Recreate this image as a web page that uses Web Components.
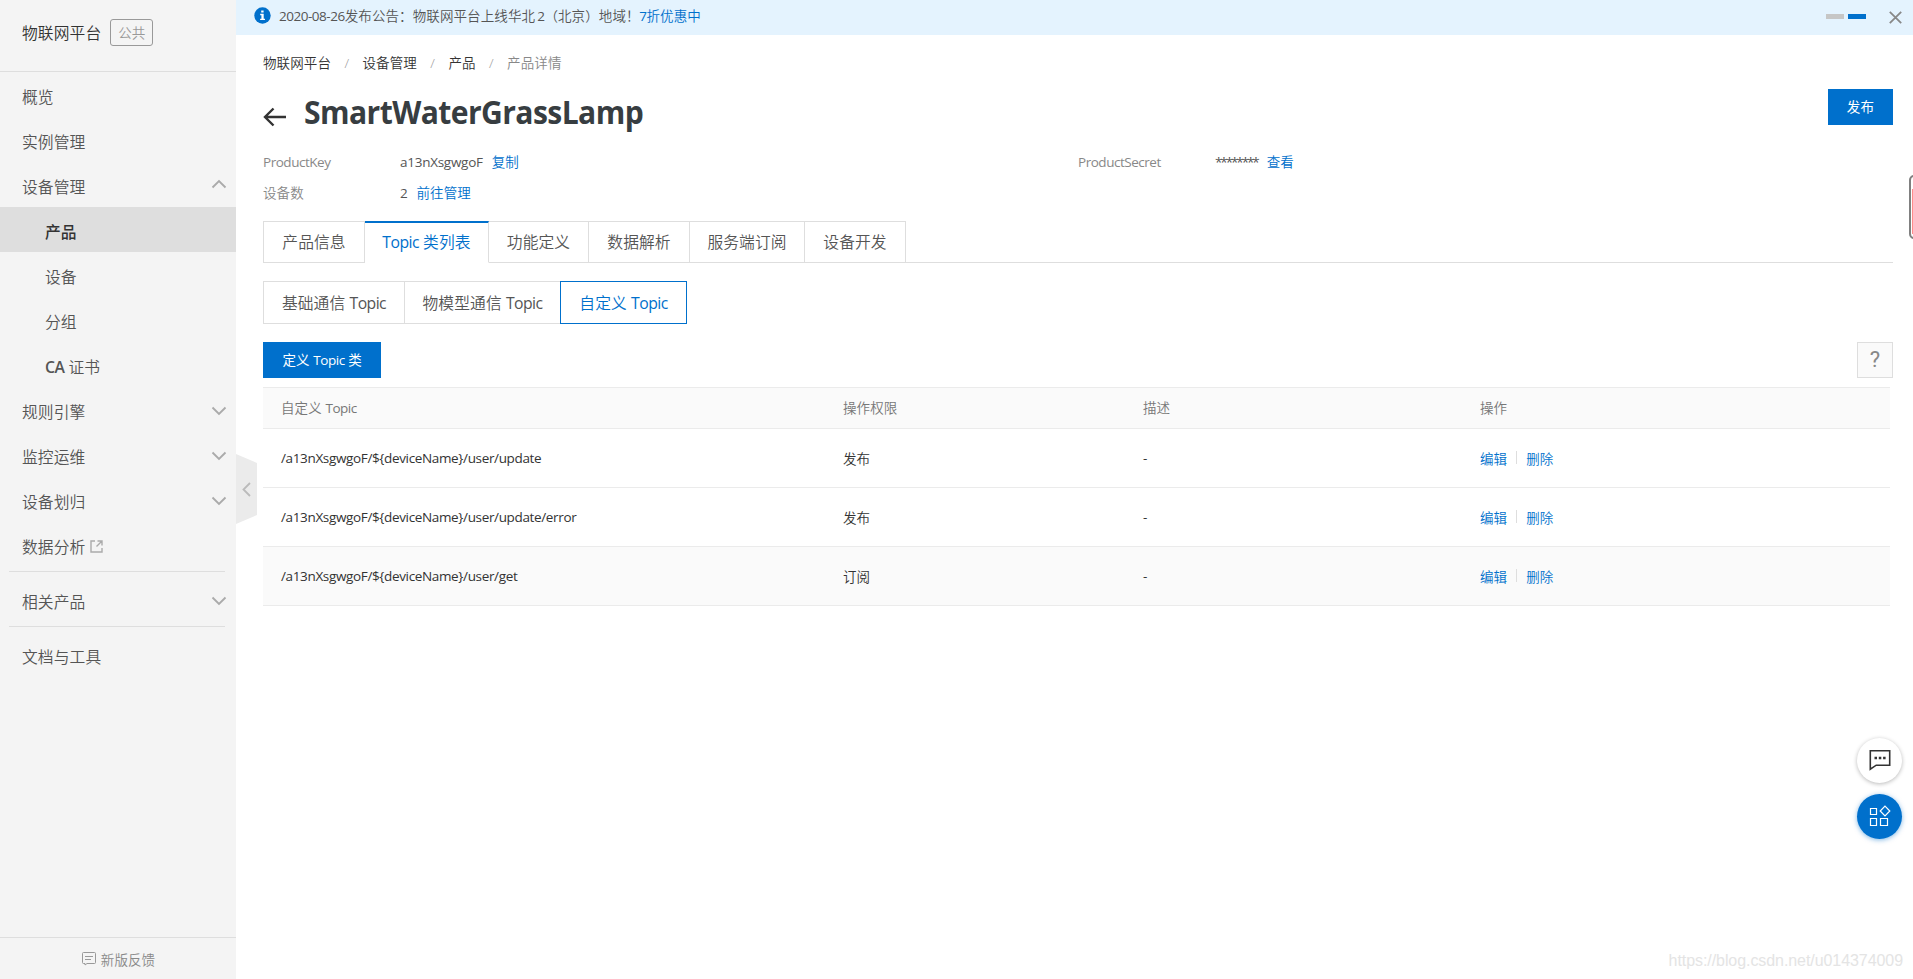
<!DOCTYPE html>
<html lang="zh-CN">
<head>
<meta charset="utf-8">
<title>物联网平台</title>
<style>
  html, body { margin: 0; height: 100%; }
  body {
    font-family: "Open Sans", "Noto Sans CJK SC", sans-serif;
    font-size: 13.5px;
    font-weight: 350;
    letter-spacing: .1px;
    color: #333;
    background: #fff;
    overflow: hidden;
    --blue: #0070cc;
    --line: #dedede;
  }
</style>
</head>
<body>
<iot-console></iot-console>

<script>
  function define(name, html, setup) {
    customElements.define(name, class extends HTMLElement {
      connectedCallback() {
        if (this.shadowRoot) return;
        this.attachShadow({ mode: 'open' });
        this.shadowRoot.innerHTML = html;
        if (setup) setup(this, this.shadowRoot);
      }
    });
  }

  // latin runs are set a little tighter than the chinese around them
  define('en-text', `
    <style>:host { font-weight: 400; letter-spacing: var(--en, -0.035em); }</style><slot></slot>`);

  define('text-link', `
    <style>
      a { color: var(--blue); text-decoration: none; cursor: pointer; }
    </style>
    <a><slot></slot></a>`);

  define('solid-button', `
    <style>
      :host { display: block; flex: none; }
      button {
        height: 36px; padding: 0 var(--pad, 19px); border: 0; display: block;
        background: var(--blue); color: #fff; cursor: pointer;
        font: inherit; font-weight: 400; line-height: 36px;
        letter-spacing: inherit; white-space: nowrap;
      }
    </style>
    <button><slot></slot></button>`);

  /* ---------- sidebar ---------- */

  define('nav-item', `
    <style>
      :host {
        display: flex; align-items: center; box-sizing: border-box;
        height: 45px; padding: 4px 9px 0 22px;
        font-size: 15.75px; color: #555;
      }
      :host([child]) { padding-left: 45px; }
      :host([active]) { background: #dedede; color: #333; font-weight: 500; }
      .label { flex: 1; display: flex; align-items: center; white-space: nowrap; }
      .chevron { display: none; margin-top: -2px; }
      :host([arrow]) .chevron { display: block; }
      :host([arrow="up"]) .chevron { transform: translateY(-2px) scaleY(-1); }
      .out { display: none; margin-left: 5px; }
      :host([external]) .out { display: block; }
    </style>
    <span class="label"><slot></slot>
      <svg class="out" width="13" height="13" viewBox="0 0 13 13" fill="none" stroke="#aaa" stroke-width="1.4">
        <path d="M5 1H1v11h11V8M7.5 1H12v4.5M12 1 6.5 6.5"/>
      </svg>
    </span>
    <svg class="chevron" width="16" height="10" viewBox="0 0 16 10" fill="none" stroke="#aaa" stroke-width="1.8">
      <path d="M1.5 1.5 8 8l6.5-6.5"/>
    </svg>`);

  define('side-nav', `
    <style>
      :host {
        display: flex; flex-direction: column; box-sizing: border-box;
        width: 236px; background: #f4f4f4;
      }
      header {
        display: flex; align-items: center; gap: 9px; box-sizing: border-box;
        height: 72px; padding: 0 0 6px 22px;
        border-bottom: 1px solid var(--line);
        font-size: 15.75px;
      }
      .tag {
        box-sizing: border-box; height: 27px; width: 43px; line-height: 26px;
        border: 1px solid #999; border-radius: 3px;
        color: #999; font-size: 13.5px; text-align: center;
      }
      nav { flex: 1; }
      hr { margin: 4px 11px 5px 9px; border: 0; height: 1px; background: var(--line); }
      footer {
        display: flex; align-items: center; justify-content: center; gap: 5px;
        box-sizing: border-box; height: 42px; padding: 0 0 0 1px;
        border-top: 1px solid var(--line);
        color: #888;
      }
    </style>
    <header><span>物联网平台</span><span class="tag">公共</span></header>
    <nav>
      <nav-item>概览</nav-item>
      <nav-item>实例管理</nav-item>
      <nav-item arrow="up">设备管理</nav-item>
      <nav-item child active>产品</nav-item>
      <nav-item child>设备</nav-item>
      <nav-item child>分组</nav-item>
      <nav-item child><span><en-text style="font-weight:600">CA</en-text> 证书</span></nav-item>
      <nav-item arrow>规则引擎</nav-item>
      <nav-item arrow>监控运维</nav-item>
      <nav-item arrow>设备划归</nav-item>
      <nav-item external>数据分析</nav-item>
      <hr>
      <nav-item arrow>相关产品</nav-item>
      <hr>
      <nav-item>文档与工具</nav-item>
    </nav>
    <footer>
      <svg width="14" height="15" viewBox="0 0 14 15" fill="none" stroke="#999">
        <path d="M1.5 1.5h11a1 1 0 0 1 1 1v9a1 1 0 0 1-1 1H5L3 14v-1.5H1.5a1 1 0 0 1-1-1v-9a1 1 0 0 1 1-1zM3 5.5h8M3 8.5h6"/>
      </svg>
      <span>新版反馈</span>
    </footer>`);

  /* ---------- top notice ---------- */

  define('notice-bar', `
    <style>
      :host {
        display: flex; align-items: center; box-sizing: border-box;
        height: 35px; padding: 0 11px 0 18px; background: #e4f3fe; color: #555;
      }
      .info { margin: -4px 8px 0 0; }
      .text { flex: 1; padding-bottom: 5px; white-space: nowrap; }
      .dots { display: flex; gap: 4px; margin-right: 23px; padding-bottom: 2px; }
      .dots i { width: 18px; height: 5px; background: #c6c6c6; }
      .dots i.on { background: var(--blue); }
    </style>
    <svg class="info" width="17" height="17" viewBox="0 0 17 17">
      <circle cx="8.5" cy="8.5" r="8.2" fill="#0070cc"/>
      <path fill="#fff" d="M7.2 3.4h2.4v2H7.2zM6.2 6.8h3.5v4.9H11v1.4H6.1v-1.4h1.3V8.2H6.2z"/>
    </svg>
    <span class="text"><slot></slot></span>
    <span class="dots"><i></i><i class="on"></i></span>
    <svg width="13" height="13" viewBox="0 0 13 13" stroke="#888" stroke-width="1.8">
      <path d="m.8.8 11.4 11.4M12.2.8.8 12.2"/>
    </svg>`);

  /* ---------- page head ---------- */

  define('crumb-item', `
    <style>
      :host { display: flex; }
      :host(:last-child) { color: #888; }
      .sep { width: 31.5px; text-align: center; color: #999; }
      :host(:last-child) .sep { display: none; }
    </style>
    <slot></slot><span class="sep">/</span>`);

  define('crumb-trail', `
    <style>:host { display: flex; height: 20px; line-height: 20px; }</style>
    <slot></slot>`);

  define('page-title', `
    <style>
      :host { display: flex; align-items: center; height: 48px; }
      h1 {
        flex: 1; margin: 0 0 0 17px; font-size: 31.5px; line-height: 48px;
        font-weight: 700; color: #373d41; letter-spacing: -.6px;
      }
      /* narrows the bold face without squeezing the gaps */
      h1 span { display: inline-block; transform: scaleX(.955); transform-origin: 0 0; }
      svg { margin-top: 9px; }
      ::slotted(solid-button) { margin-top: -10px; }
    </style>
    <svg width="24" height="20" viewBox="0 0 24 20" fill="none" stroke="#333" stroke-width="2.4">
      <path d="M10.5 1.5 2 10l8.5 8.5M2 10h21"/>
    </svg>
    <h1><span><slot name="name"></slot></span></h1>
    <slot></slot>`);

  define('info-field', `
    <style>
      :host { display: flex; height: 31px; line-height: 31px; color: #555; white-space: nowrap; }
      .label { width: 137px; color: #888; }
      .value { display: flex; gap: 9px; --en: -.02em; }
    </style>
    <span class="label"><slot name="label"></slot></span>
    <span class="value"><slot></slot></span>`);

  /* ---------- tabs ---------- */

  define('tab-item', `
    <style>
      :host {
        display: block; box-sizing: border-box; height: 42px;
        width: var(--w); text-align: center;
        line-height: 41px; font-size: 15.75px; color: #555; white-space: nowrap;
        border: 1px solid var(--line); border-left-width: 0;
      }
      :host(:first-child) { border-left-width: 1px; }
      :host([active]) {
        color: var(--blue); border-top: 2px solid var(--blue);
        border-bottom-color: #fff; line-height: 39px;
      }
      :host([box]) { height: 43px; line-height: 42px; }
      :host([box][active]) {
        border: 1px solid var(--blue); margin-left: -1px; line-height: 42px;
      }
    </style>
    <slot></slot>`);

  define('tab-strip', `
    <style>
      :host { display: flex; }
      :host([line]) { box-shadow: inset 0 -1px 0 var(--line); }
    </style>
    <slot></slot>`);

  define('help-box', `
    <style>
      :host {
        display: flex; align-items: center; justify-content: center;
        box-sizing: border-box; width: 36px; height: 36px;
        border: 1px solid var(--line); background: #fafafa;
        font: 22px/36px Roboto, sans-serif; color: #888;
      }
    </style>
    <slot></slot>`);

  /* ---------- topic table ---------- */

  define('topic-table', `
    <style>
      :host { display: block; border-top: 1px solid #ebebeb; white-space: nowrap; }
      .row {
        display: grid; grid-template-columns: 562px 300px 337px 1fr;
        align-items: center; box-sizing: border-box;
        height: 59px; padding: 0 18px 1px;
        border-bottom: 1px solid #ebebeb;
        --en: -.026em;
      }
      .row:last-child { background: #fafafa; }
      .head { height: 41px; padding-bottom: 2px; background: #fafafa; color: #777; --en: -.035em; }
      .ops { display: flex; align-items: center; }
      .ops i { width: 1px; height: 13px; margin: 0 9px; background: #dedede; }
    </style>
    <div class="row head">
      <span>自定义 <en-text>Topic</en-text></span><span>操作权限</span><span>描述</span><span>操作</span>
    </div>`,
    (host, root) => {
      const rows = [
        ['/a13nXsgwgoF/${deviceName}/user/update', '发布'],
        ['/a13nXsgwgoF/${deviceName}/user/update/error', '发布'],
        ['/a13nXsgwgoF/${deviceName}/user/get', '订阅']
      ];
      rows.forEach(([topic, perm]) => {
        const row = document.createElement('div');
        row.className = 'row';
        row.innerHTML = `
          <span><en-text>${topic}</en-text></span><span>${perm}</span><span><en-text>-</en-text></span>
          <span class="ops"><text-link>编辑</text-link><i></i><text-link>删除</text-link></span>`;
        root.appendChild(row);
      });
    });

  /* ---------- floating things ---------- */

  define('round-button', `
    <style>
      :host {
        display: flex; align-items: center; justify-content: center;
        width: 45px; height: 45px; border-radius: 50%; background: #fff;
        box-shadow: 0 1px 4px rgba(0, 0, 0, .28);
      }
      :host([blue]) { background: var(--blue); box-shadow: 0 1px 5px rgba(0, 112, 204, .5); }
    </style>
    <slot></slot>`);

  define('fold-handle', `
    <style>
      :host { display: block; width: 21px; height: 70px; }
      svg { display: block; }
    </style>
    <svg width="21" height="70" viewBox="0 0 21 70">
      <path d="M0 0 21 9v52L0 70z" fill="#ebebeb"/>
      <path d="m14 29-6.5 6.5L14 42" fill="none" stroke="#bbb" stroke-width="1.8"/>
    </svg>`);

  define('iot-console', `
    <style>
      :host { display: flex; height: 979px; position: relative; overflow: hidden; }
      side-nav { flex: none; }
      main { flex: 1; min-width: 0; }
      notice-bar text-link { margin-left: -4px; }
      .page { padding: 18px 20px 0 27px; }
      .title { margin-top: 15px; }
      .fields { display: grid; grid-template-columns: 815px 1fr; padding: 11px 0 12px; }
      .stars { --en: -2.1px; }
      .sub { margin: 18px 0; }
      .tools { display: flex; justify-content: space-between; margin-bottom: 9px; --pad: 19.5px; }
      topic-table { margin-right: 3px; }
      /* overlays */
      fold-handle { position: absolute; left: 236px; top: 454px; }
      .floats { position: absolute; right: 11px; top: 738px; display: grid; gap: 11px; }
      .floats svg { margin: -2px 0 0 1px; }
      .side-tab {
        position: absolute; right: -20px; top: 175px; width: 20px; height: 60px;
        border: 2px solid #808080; border-radius: 5px; background: #fff;
      }
      .side-tab i { position: absolute; left: 1px; top: 12px; width: 16px; height: 45px; background: #ff8b8b; }
      .mark {
        position: absolute; right: 10px; bottom: 8px;
        font: 16px/20px "Liberation Sans", sans-serif; color: #e4e4e4; letter-spacing: -.07px;
      }
    </style>
    <side-nav></side-nav>
    <main>
      <notice-bar><en-text>2020-08-26</en-text>发布公告：物联网平台上线华北<en-text style="margin-left:-1px">2</en-text>（北京）地域！<text-link><en-text>7</en-text>折优惠中</text-link></notice-bar>
      <div class="page">
        <crumb-trail>
          <crumb-item>物联网平台</crumb-item>
          <crumb-item>设备管理</crumb-item>
          <crumb-item>产品</crumb-item>
          <crumb-item>产品详情</crumb-item>
        </crumb-trail>
        <page-title class="title">
          <span slot="name">SmartWaterGrassLamp</span>
          <solid-button>发布</solid-button>
        </page-title>
        <div class="fields">
          <info-field><en-text slot="label">ProductKey</en-text><en-text>a13nXsgwgoF</en-text><text-link>复制</text-link></info-field>
          <info-field><en-text slot="label">ProductSecret</en-text><span class="stars"><en-text>********</en-text></span><text-link>查看</text-link></info-field>
          <info-field><span slot="label">设备数</span><en-text>2</en-text><text-link>前往管理</text-link></info-field>
        </div>
        <tab-strip line>
          <tab-item style="--w:102px">产品信息</tab-item>
          <tab-item active style="--w:124px"><en-text>Topic</en-text> 类列表</tab-item>
          <tab-item style="--w:100px">功能定义</tab-item>
          <tab-item style="--w:101px">数据解析</tab-item>
          <tab-item style="--w:115px">服务端订阅</tab-item>
          <tab-item style="--w:101px">设备开发</tab-item>
        </tab-strip>
        <tab-strip class="sub">
          <tab-item box style="--w:142px">基础通信 <en-text>Topic</en-text></tab-item>
          <tab-item box style="--w:156px">物模型通信 <en-text>Topic</en-text></tab-item>
          <tab-item box active style="--w:127px">自定义 <en-text>Topic</en-text></tab-item>
        </tab-strip>
        <div class="tools">
          <solid-button>定义 <en-text>Topic</en-text> 类</solid-button>
          <help-box>?</help-box>
        </div>
        <topic-table></topic-table>
      </div>
    </main>
    <fold-handle></fold-handle>
    <div class="side-tab"><i></i></div>
    <div class="floats">
      <round-button>
        <svg width="22" height="22" viewBox="0 0 22 22" fill="none" stroke="#333" stroke-width="1.6">
          <path d="M1.3 1.8h19.4v14.4H7.2l-5.9 4z"/>
          <path d="M5.5 9H8M9.8 9h2.5M14.1 9h2.5" stroke-width="2.4"/>
        </svg>
      </round-button>
      <round-button blue>
        <svg width="22" height="22" viewBox="0 0 22 22" fill="none" stroke="#fff" stroke-width="1.2">
          <path d="M1.5 3.5h6v6h-6zM1.5 13.5h6v7h-6zM11.5 13.5h7v7h-7zM16 1.2l4.8 4.8-4.8 4.8L11.2 6z"/>
        </svg>
      </round-button>
    </div>
    <span class="mark">https://blog.csdn.net/u014374009</span>`);
</script>
</body>
</html>
